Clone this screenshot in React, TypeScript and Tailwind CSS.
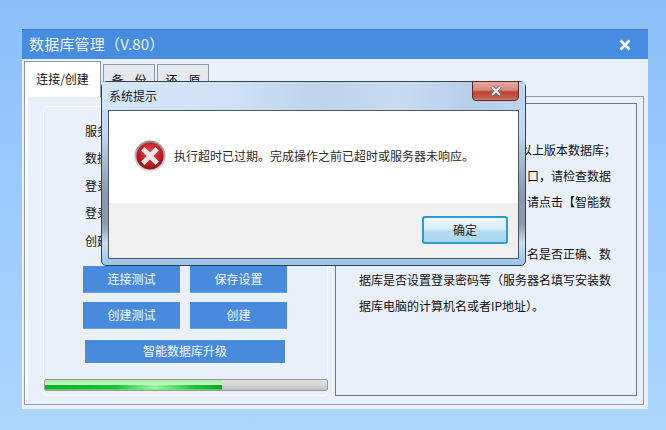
import React from 'react';

const font = { fontFamily: '"Noto Sans CJK SC", sans-serif' };

const fieldLabels = ['服务器：', '数据库：', '登录名：', '登录密码：', '创建路径：'];

function ActionButton({ label }: { label: string }) {
  return (
    <button className="h-[27px] w-[97px] bg-[#488bdd] text-[12px] text-[#f4f8fd] border-b border-[#6f9fd4]">
      {label}
    </button>
  );
}

function ErrorIcon() {
  return (
    <svg width="32" height="32" viewBox="0 0 32 32" className="shrink-0">
      <defs>
        <radialGradient id="redBall" cx="50%" cy="38%" r="65%">
          <stop offset="0%" stopColor="#e8504f" />
          <stop offset="55%" stopColor="#c9202a" />
          <stop offset="100%" stopColor="#8a0f16" />
        </radialGradient>
        <linearGradient id="ring" x1="0" y1="0" x2="0" y2="1">
          <stop offset="0%" stopColor="#8c8c8c" />
          <stop offset="100%" stopColor="#e2e2e2" />
        </linearGradient>
      </defs>
      <circle cx="16" cy="16" r="15.6" fill="url(#ring)" />
      <circle cx="16" cy="16" r="13.6" fill="url(#redBall)" />
      <path d="M10.5 10.5 L21.5 21.5 M21.5 10.5 L10.5 21.5" stroke="#ece7e7" strokeWidth="4.8" strokeLinecap="square" />
    </svg>
  );
}

function Dialog() {
  return (
    <div className="absolute left-[79px] top-[52px] flex h-[185px] w-[425px] flex-col rounded-t-[6px] rounded-b-[5px] border border-[#33424f] bg-[linear-gradient(180deg,#c5dcf2_0%,#c2d9f0_28%,#b4c8dc_36%,#8a98a8_62%,#8d9aa8_78%,#cfdcea_88%,#a7cdf2_96%,#9cc2e6_100%)] px-[6px] pb-[6px]">
      <div className="-mx-[6px] flex h-[28px] items-center bg-[linear-gradient(90deg,#d3e6f7_0%,#cfe2f5_30%,#bcd3ea_52%,#c8dcf0_70%,#b5cfe9_88%,#bcd6ef_100%)] px-[7px] text-[12px] text-[#1b1b1b]">
        系统提示
      </div>
      <div className="flex flex-1 flex-col border border-[#4b5966] bg-white">
        <div className="flex h-[92px] items-start pl-[25px] pt-[29px]">
          <div className="flex h-[32px] items-center gap-[8px] text-[12px] text-[#2a2a2a]">
            <ErrorIcon />
            <span className="whitespace-nowrap">执行超时已过期。完成操作之前已超时或服务器未响应。</span>
          </div>
        </div>
        <div className="flex flex-1 justify-end bg-[#f0f0f0] pr-[10px] pt-[13px]">
          <button className="h-[28px] w-[86px] rounded-[3px] border-2 border-[#2a9ccf] bg-[linear-gradient(180deg,#eef7fc_0%,#d8edf8_45%,#b5dcf0_55%,#a9d6ec_100%)] text-[12px] text-[#222]">
            确定
          </button>
        </div>
      </div>
      <div className="absolute right-[6px] top-[-1px] flex h-[20px] w-[47px] items-center justify-center rounded-b-[4px] border border-[#5a2a26] bg-[linear-gradient(180deg,#e3a79c_0%,#d68a7e_45%,#c2402c_55%,#bf5a48_85%,#cf7f6e_100%)]">
        <svg width="12" height="10" viewBox="0 0 12 10">
          <path d="M2 1 L10 9 M10 1 L2 9" stroke="#55606a" strokeWidth="3.6" />
          <path d="M2 1 L10 9 M10 1 L2 9" stroke="#f2f2f2" strokeWidth="2.2" />
        </svg>
      </div>
    </div>
  );
}

export default function App() {
  return (
    <div
      style={font}
      className="h-[430px] w-[666px] overflow-hidden bg-[linear-gradient(180deg,#8cbff9_0%,#97c7fc_35%,#add6fc_100%)] pl-[22px] pt-[29px]"
    >
      <div className="relative flex h-[380px] w-[626px] flex-col bg-[#e9f0f9]">
        {/* Title bar */}
        <div className="flex h-[30px] shrink-0 items-center justify-between border-t border-[#3d74bd] bg-[#468ce0] pl-[7px] pr-[17px]">
          <span className="text-[15px] tracking-[0.2px] text-[#eef4fc]">数据库管理（V.80）</span>
          <svg width="12" height="12" viewBox="0 0 12 12">
            <path d="M1.5 1.5 L10.5 10.5 M10.5 1.5 L1.5 10.5" stroke="white" strokeWidth="2.6" />
          </svg>
        </div>

        {/* Tabs */}
        <div className="flex flex-1 flex-col pb-[4px] pl-[2px] pr-[4px] pt-[2px]">
          <div className="relative flex h-[35px] shrink-0 items-end gap-[2px] text-[12px] text-[#111]">
            <div className="-mb-px flex h-[36px] w-[77px] items-center justify-center border border-b-0 border-[#8f99a3] bg-white pb-[2px]">
              连接/创建
            </div>
            <div className="flex h-[32px] w-[52px] items-center justify-center gap-[11px] border border-b-0 border-[#8f99a3] bg-[#e4e9f0] pb-[2px]">
              <span>备</span>
              <span>份</span>
            </div>
            <div className="flex h-[32px] w-[52px] items-center justify-center gap-[11px] border border-b-0 border-[#8f99a3] bg-[#e4e9f0] pb-[2px]">
              <span>还</span>
              <span>原</span>
            </div>
          </div>

          <div className="flex flex-1 border border-[#8f99a3]">
            <div className="flex flex-1 gap-[7px] border-l-[3px] border-white bg-[#e9f0f9] pb-[8px] pl-[15px]">
              {/* Left group */}
              <div className="mt-[9px] flex w-[285px] flex-col rounded-[4px] border border-[#f6f9fd] pt-[10px]">
                <div className="flex flex-col pl-[41px] text-[12px] text-[#111]">
                  {fieldLabels.map((label) => (
                    <div key={label} className="flex h-[27.5px] items-center">
                      {label}
                    </div>
                  ))}
                </div>
                <div className="mt-[11px] flex flex-col gap-[9px] pl-[39px]">
                  <div className="flex gap-[10px]">
                    <ActionButton label="连接测试" />
                    <ActionButton label="保存设置" />
                  </div>
                  <div className="flex gap-[10px]">
                    <ActionButton label="创建测试" />
                    <ActionButton label="创建" />
                  </div>
                  <button className="ml-[1px] mt-px h-[25px] w-[202px] border border-[#f2f6fb] bg-[#488bdd] text-[12px] text-[#f4f8fd]">
                    智能数据库升级
                  </button>
                </div>
                <div className="mt-[15px] h-[12px] w-[284px] overflow-hidden rounded-[2px] border border-[#9a9a9a] bg-[linear-gradient(180deg,#e0e0e0_0%,#d4d4d4_50%,#bdbdbd_100%)]">
                  <div className="flex h-full w-[177px] flex-col bg-[linear-gradient(90deg,#0db028_0%,#1cc03a_40%,#9df59e_62%,#1cc03a_85%,#0ca524_100%)]">
                    <div className="h-[5px] shrink-0 bg-[linear-gradient(180deg,#a8f2a4_0%,#c4f8bf_100%)]" />
                    <div className="h-[4px] shrink-0" />
                    <div className="flex-1 bg-[#7fe686]/60" />
                  </div>
                </div>
              </div>

              {/* Right group */}
              <div className="mt-[6px] w-[302px] border border-[#6e7780] pl-[23px] pt-[33px] text-[12px] leading-[26px] text-[#111]">
                <div className="w-[257px] whitespace-nowrap text-right">以上版本数据库；</div>
                <div className="w-[257px] whitespace-nowrap pr-[5px] text-right">口，请检查数据</div>
                <div className="w-[257px] whitespace-nowrap pr-[5px] text-right">请点击【智能数</div>
                <div className="h-[26px]" />
                <div className="w-[257px] whitespace-nowrap pr-[5px] text-right">名是否正确、数</div>
                <div className="whitespace-nowrap">据库是否设置登录密码等（服务器名填写安装数</div>
                <div className="whitespace-nowrap">据库电脑的计算机名或者IP地址）。</div>
              </div>
            </div>
          </div>
        </div>

        <Dialog />
      </div>
    </div>
  );
}
